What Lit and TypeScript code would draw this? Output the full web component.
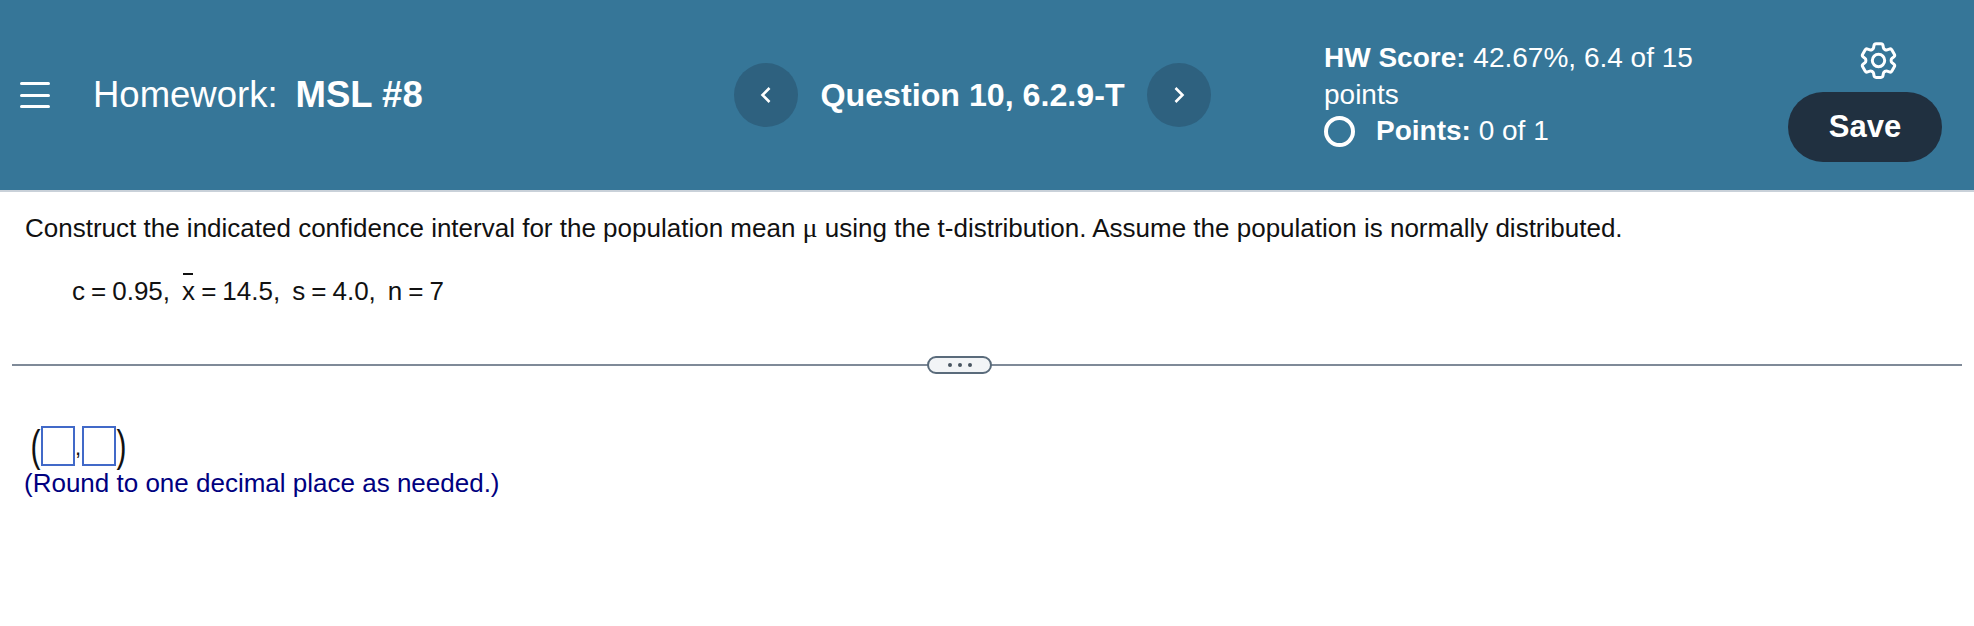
import { LitElement, css, html } from 'lit';
import { customElement } from 'lit/decorators.js';

const gearPath =
  'M9.594 3.94c.09-.542.56-.94 1.11-.94h2.593c.55 0 1.02.398 1.11.94l.213 1.281c.063.374.313.686.645.87.074.04.147.083.22.127.325.196.72.257 1.075.124l1.217-.456a1.125 1.125 0 0 1 1.37.49l1.296 2.247a1.125 1.125 0 0 1-.26 1.431l-1.003.827c-.293.241-.438.613-.43.992a7.723 7.723 0 0 1 0 .255c-.008.378.137.75.43.991l1.004.827c.424.35.534.955.26 1.43l-1.298 2.247a1.125 1.125 0 0 1-1.369.491l-1.217-.456c-.355-.133-.75-.072-1.076.124a6.47 6.47 0 0 1-.22.128c-.331.183-.581.495-.644.869l-.213 1.281c-.09.543-.56.94-1.11.94h-2.594c-.55 0-1.019-.398-1.11-.94l-.213-1.281c-.062-.374-.312-.686-.644-.87a6.52 6.52 0 0 1-.22-.127c-.325-.196-.72-.257-1.076-.124l-1.217.456a1.125 1.125 0 0 1-1.369-.49l-1.297-2.247a1.125 1.125 0 0 1 .26-1.431l1.004-.827c.292-.24.437-.613.43-.991a6.932 6.932 0 0 1 0-.255c.007-.38-.138-.751-.43-.992l-1.004-.827a1.125 1.125 0 0 1-.26-1.43l1.297-2.247a1.125 1.125 0 0 1 1.37-.491l1.216.456c.356.133.751.072 1.076-.124.072-.044.146-.086.22-.128.332-.183.582-.495.644-.869l.214-1.28Z';

@customElement('app-root')
export class AppRoot extends LitElement {
  render() {
    return html`
      <header class="bar">
        <div class="title">
          <span class="menu"><i></i><i></i><i></i></span>
          <span class="hw">Homework:</span>
          <b>MSL #8</b>
        </div>
        <nav class="nav">
          <span class="round">
            <svg width="14" height="18" viewBox="0 0 14 18"><path d="M10.5 2 3.5 9l7 7" /></svg>
          </span>
          <b>Question 10, 6.2.9-T</b>
          <span class="round">
            <svg width="14" height="18" viewBox="0 0 14 18"><path d="m3.5 2 7 7-7 7" /></svg>
          </span>
        </nav>
        <div class="score">
          <div class="score-text"><b>HW Score:</b> 42.67%, 6.4 of 15 points</div>
          <div class="points">
            <span class="ring"></span>
            <span><b>Points:</b> 0 of 1</span>
          </div>
        </div>
        <div class="actions">
          <svg class="gear" width="45" height="45" viewBox="0 0 24 24">
            <path d="${gearPath}" />
            <circle cx="12" cy="12" r="3.3" />
          </svg>
          <button class="save">Save</button>
        </div>
      </header>

      <main class="question">
        <p class="prompt">
          Construct the indicated confidence interval for the population mean
          <span class="mu">μ</span> using the t-distribution. Assume the population is normally
          distributed.
        </p>
        <p class="given">
          c = 0.95, &nbsp;<span class="xbar">x</span> = 14.5, &nbsp;s = 4.0, &nbsp;n = 7
        </p>
      </main>

      <div class="divider">
        <span class="pill"><i></i><i></i><i></i></span>
      </div>

      <section class="answer">
        <div class="interval">
          <span class="paren">(</span>
          <span class="box"></span>
          <span class="comma">,</span>
          <span class="box"></span>
          <span class="paren">)</span>
        </div>
        <div class="hint">(Round to one decimal place as needed.)</div>
      </section>
    `;
  }

  static styles = css`
    :host {
      display: block;
      height: 626px;
      background: #fff;
      font-family: 'Liberation Sans', Arial, sans-serif;
      color: #111;
      overflow: hidden;
    }

    .bar {
      display: grid;
      grid-template-columns: 734px 590px 1fr auto;
      align-items: center;
      height: 190px;
      background: #367698;
      border-bottom: 2px solid #c9d1d9;
      color: #fff;
    }

    .title {
      display: flex;
      align-items: center;
      padding-left: 20px;
      font-size: 36.5px;
    }
    .title b {
      margin-left: 18px;
    }

    .menu {
      display: flex;
      flex-direction: column;
      gap: 8.5px;
      width: 30px;
      margin-right: 43px;
    }
    .menu i {
      height: 3px;
      border-radius: 2px;
      background: #fff;
    }

    .nav {
      display: flex;
      align-items: center;
      gap: 22.5px;
      font-size: 32.2px;
    }
    .round {
      display: flex;
      align-items: center;
      justify-content: center;
      width: 64px;
      height: 64px;
      border-radius: 50%;
      background: #2e617f;
    }
    .round path {
      fill: none;
      stroke: #fff;
      stroke-width: 2.6;
    }

    .score {
      width: 420px;
      font-size: 28px;
      line-height: 36.5px;
    }
    .points {
      display: flex;
      align-items: center;
      gap: 21px;
    }
    .ring {
      box-sizing: border-box;
      width: 31px;
      height: 31px;
      border: 4px solid #fff;
      border-radius: 50%;
    }

    .actions {
      display: flex;
      flex-direction: column;
      align-items: flex-end;
      align-self: start;
      gap: 9.5px;
      padding: 37.5px 32px 0 0;
    }
    .gear {
      margin-right: 41.5px;
    }
    .gear path,
    .gear circle {
      fill: none;
      stroke: #fff;
      stroke-width: 1.6;
    }
    .save {
      width: 154px;
      height: 70px;
      border: 0;
      border-radius: 35px;
      background: #203040;
      color: #fff;
      font: bold 31px 'Liberation Sans', Arial, sans-serif;
    }

    .question {
      padding: 16px 0 0 25px;
      font-size: 26px;
    }
    .prompt {
      margin: 0;
      line-height: 40px;
    }
    .mu {
      font-family: 'Liberation Serif', serif;
      font-size: 28px;
    }
    .given {
      margin: 23px 0 0 47px;
      line-height: 40px;
      font-size: 26px;
      word-spacing: -1.2px;
    }
    .xbar {
      position: relative;
      display: inline-block;
    }
    .xbar::before {
      content: '';
      position: absolute;
      top: 2px;
      left: 1px;
      width: 10px;
      height: 2px;
      background: #111;
    }

    .divider {
      display: flex;
      align-items: center;
      height: 18px;
      margin: 45px 12px 0;
      padding-left: 915px;
      background: linear-gradient(#7f8a98, #7f8a98) center / 100% 2px no-repeat;
    }
    .pill {
      box-sizing: border-box;
      display: flex;
      align-items: center;
      justify-content: center;
      gap: 6px;
      width: 65px;
      height: 18px;
      border: 2px solid #5a6b7b;
      border-radius: 9px;
      background: #f2f4f6;
    }
    .pill i {
      width: 4px;
      height: 4px;
      border-radius: 50%;
      background: #4a5561;
    }

    .answer {
      padding: 52px 0 0 24px;
    }
    .interval {
      display: flex;
      align-items: center;
      height: 40px;
      padding-left: 6px;
    }
    .box {
      box-sizing: border-box;
      width: 34px;
      height: 40px;
      border: 2px solid #4169c8;
    }
    .paren {
      width: 11px;
      font-size: 30px;
      line-height: 40px;
      text-align: center;
      transform: scale(1, 1.45);
    }
    .comma {
      width: 7px;
      font-size: 22px;
      line-height: 40px;
      padding-top: 4px;
    }
    .hint {
      color: #00007f;
      font-size: 26px;
      line-height: 34px;
    }
  `;
}

declare global {
  interface HTMLElementTagNameMap {
    'app-root': AppRoot;
  }
}
